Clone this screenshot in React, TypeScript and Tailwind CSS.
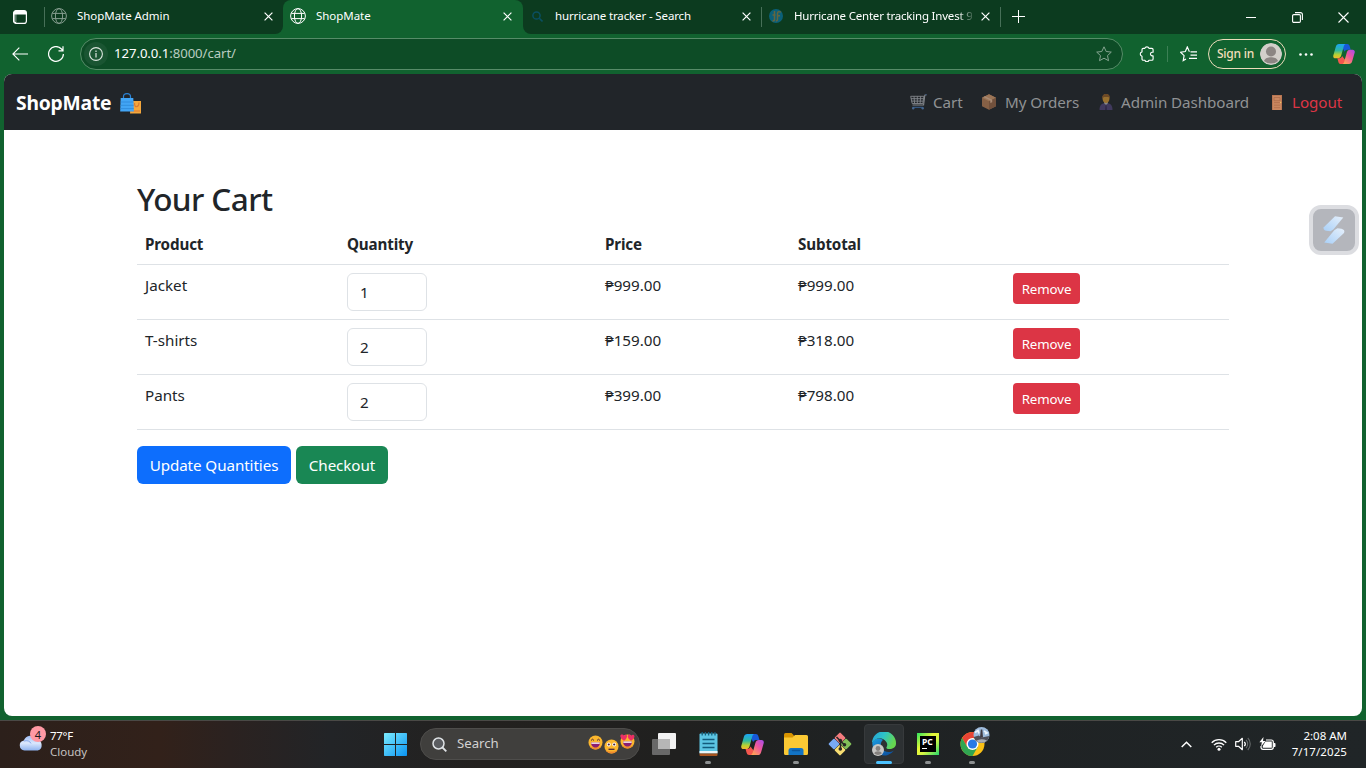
import React from "react";

type Box = { children: React.ReactNode; className?: string; vb?: string };

function Svg({ children, className = "", vb = "0 0 16 16" }: Box) {
  return (
    <svg viewBox={vb} className={`block shrink-0 ${className}`} fill="none">
      {children}
    </svg>
  );
}

/* ---------- browser chrome icons ---------- */

const Globe = ({ className = "" }) => (
  <Svg className={`h-4 w-4 ${className}`}>
    <g stroke="#fff" strokeWidth="1">
      <circle cx="8" cy="8" r="7.4" />
      <ellipse cx="8" cy="8" rx="3.6" ry="7.4" />
      <path d="M1.3 5.4h13.4M1.3 10.6h13.4" />
    </g>
  </Svg>
);

const Close = () => (
  <Svg className="h-[9px] w-[9px]" vb="0 0 9 9">
    <path d="M.6.6l7.8 7.8M8.4.6L.6 8.4" stroke="#fff" strokeWidth="1.2" />
  </Svg>
);

const Copilot = ({ className = "", id }: { className?: string; id: string }) => (
  <Svg className={className} vb="0 0 24 22">
    <defs>
      <linearGradient id={`${id}a`} x1="0" y1="0" x2="0" y2="1">
        <stop offset="0" stopColor="#1ba3f5" />
        <stop offset=".45" stopColor="#2fb9a0" />
        <stop offset=".75" stopColor="#b8d230" />
        <stop offset="1" stopColor="#f5b82e" />
      </linearGradient>
      <linearGradient id={`${id}b`} x1="1" y1="0" x2=".2" y2="1">
        <stop offset="0" stopColor="#a44cf0" />
        <stop offset=".5" stopColor="#f0569c" />
        <stop offset="1" stopColor="#ffa552" />
      </linearGradient>
    </defs>
    <path d="M11 0h4.600c1.300 0 2.100.8 2.500 2l1.300 4.200h-3.800c-1.600 0-2.400 1-2.800 2.400L9.500 3z" fill="#1758d8" />
    <path d="M6.500 0h7.200c-1.300.500-1.700 1.700-2.100 3.100L9 12.500c-.6 2.200-1.600 3.300-3.700 3.300H2.600C.6 15.800-.2 14.200.3 12.300L3 3C3.600 1 4.700 0 6.500 0z" fill={`url(#${id}a)`} />
    <path d="M13 22H8.400c-1.300 0-2.100-.8-2.500-2l-1.200-4.200h1.800c2 0 2.900-1.200 3.400-2.700L14.500 19z" fill="#f4574e" />
    <path d="M17.500 22h-7.200c1.300-.5 1.700-1.700 2.100-3.100L15 9.500c.6-2.200 1.600-3.300 3.700-3.300h2.700c2 0 2.800 1.600 2.300 3.500L21 19c-.6 2-1.700 3-3.500 3z" fill={`url(#${id}b)`} />
  </Svg>
);

function Tab({ title, icon, className = "", fade = false, track }: { title: string; icon: React.ReactNode; className?: string; fade?: boolean; track: string }) {
  return (
    <div className={`flex h-full shrink-0 items-center pb-0.5 ${className}`}>
      <span className="flex w-[18px] justify-center">{icon}</span>
      <span
        className={`ml-[9px] w-[178px] whitespace-nowrap text-[11.5px] text-white ${track} ${
          fade ? "[mask-image:linear-gradient(90deg,#000_164px,transparent_182px)]" : ""
        }`}
      >
        {title}
      </span>
      <span className="ml-[9px]">
        <Close />
      </span>
    </div>
  );
}

function TabStrip() {
  return (
    <div className="flex h-[34px] bg-[#11622f]">
      <div className="flex h-full w-[283px] items-center rounded-br-lg bg-[#0c3b1f]">
        <div className="flex w-11 justify-center pb-px pr-1">
          <Svg className="h-[14px] w-[14px]" vb="0 0 14 14">
            <rect x=".6" y=".6" width="12.800" height="12.800" rx="2.500" stroke="#fff" strokeWidth="1.200" />
            <path d="M.6 3.200C.6 1.500 1.500.6 3 .6h8c1.500 0 2.400 1 2.400 2.600v1.300H.6zM.6 4h2.600v9.400H3C1.500 13.400.6 12.500.6 11z" fill="#fff" />
            <path d="M1.500 4.500H3V12H2q-.5-.3-.5-1z" fill="#5d7e6a" />
          </Svg>
        </div>
        <div className="h-5 w-px bg-[#477058]" />
        <Tab title="ShopMate Admin" icon={<Globe className="opacity-50" />} className="pl-[5px]" track="tracking-[-0.05px]" />
      </div>
      <div className="w-[240px] bg-[linear-gradient(#0c3b1f_50%,#11622f_50%)]">
        <div className="h-full rounded-t-lg bg-[#11622f]">
          <Tab title="ShopMate" icon={<Globe />} className="pl-[6px]" track="tracking-[-0.05px]" />
        </div>
      </div>
      <div className="flex h-full flex-1 items-center rounded-bl-lg bg-[#0c3b1f]">
        <div className="w-[238px]">
          <Tab
            title="hurricane tracker - Search"
            className="pl-[5px]"
            track="tracking-[-0.13px]"
            icon={
              <Svg className="h-[11px] w-[11px]" vb="0 0 11 11">
                <circle cx="4.500" cy="4.500" r="3.600" stroke="#0a4f61" strokeWidth="1.500" />
                <path d="M7.300 7.300l3.200 3.200" stroke="#0a4f61" strokeWidth="1.600" />
              </Svg>
            }
          />
        </div>
        <div className="h-5 w-px bg-[#477058]" />
        <div className="w-[238px]">
          <Tab
            title="Hurricane Center tracking Invest 9"
            className="pl-[5px]"
            fade
            track="tracking-[-0.2px]"
            icon={
              <Svg className="h-[14px] w-[14px]" vb="0 0 14 14">
                <circle cx="7" cy="7" r="7" fill="#0b6079" />
                <path d="M5.500 2v8.500c0 1-1 1.500-2 1.500M3.500 6h3M12 3.200C10 2.200 8.500 2.500 8.500 4.500v5.800c0 1-.6 1.700-1.600 1.700M8 6.800h3" stroke="#64663f" strokeWidth="1.500" />
              </Svg>
            }
          />
        </div>
        <div className="h-5 w-px bg-[#477058]" />
        <div className="flex w-[35px] justify-center pb-0.5">
          <Svg className="h-[13px] w-[13px]" vb="0 0 13 13">
            <path d="M6.500 0v13M0 6.500h13" stroke="#fff" strokeWidth="1" />
          </Svg>
        </div>
        <div className="ml-auto flex">
          <span className="flex w-[46px] items-center justify-center">
            <span className="h-px w-2.5 bg-white" />
          </span>
          <span className="flex w-[46px] justify-center">
            <Svg className="h-[11px] w-[11px]" vb="0 0 11 11">
              <rect x=".6" y="2.600" width="7.800" height="7.800" rx="1.200" stroke="#fff" strokeWidth="1.100" />
              <path d="M3 .6h5.400c1.200 0 2 .8 2 2V8" stroke="#fff" strokeWidth="1.100" />
            </Svg>
          </span>
          <span className="flex w-[46px] justify-center">
            <Svg className="h-[11px] w-[11px]" vb="0 0 11 11">
              <path d="M.5.5l10 10M10.500.5l-10 10" stroke="#fff" strokeWidth="1.100" />
            </Svg>
          </span>
        </div>
      </div>
    </div>
  );
}

function Toolbar() {
  return (
    <div className="flex h-10 items-center bg-[#11622f]">
      <span className="flex w-10 justify-center">
        <Svg className="h-[14px] w-4" vb="0 0 16 14">
          <path d="M16 7H1M7.300.6L.9 7l6.400 6.400" stroke="#fff" strokeWidth="1.100" />
        </Svg>
      </span>
      <span className="flex w-8 justify-center">
        <Svg className="h-4 w-4">
          <path d="M15.400 8A7.400 7.400 0 1 1 13.200 2.700L15 4.500M15 .3v4.500h-4.500" stroke="#fff" strokeWidth="1.200" />
        </Svg>
      </span>
      <div className="ml-2 flex h-8 w-[1043px] items-center rounded-full border border-[#568c68] bg-[#0d4c26] pl-[3px] pr-[10px]">
        <span className="flex h-6 w-6 items-center justify-center rounded-full bg-[#1a5532]">
          <Svg className="h-[14px] w-[14px]" vb="0 0 14 14">
            <circle cx="7" cy="7" r="6.400" stroke="#dce7df" strokeWidth="1.100" />
            <path d="M7 6v4.500M7 3.500v1.400" stroke="#dce7df" strokeWidth="1.200" />
          </Svg>
        </span>
        <span className="ml-[6px] whitespace-nowrap text-[13.200px] tracking-[-0.07px] text-[#bacdc1]">
          <span className="text-white">127.0.0.1</span>:8000/cart/
        </span>
        <Svg className="ml-auto h-4 w-4">
          <path d="M8 .8l2.200 4.700 5.100.6-3.800 3.500 1 5.100L8 12.200l-4.500 2.500 1-5.100L.7 6.100l5.100-.6z" stroke="#86a591" strokeWidth="1" strokeLinejoin="round" />
        </Svg>
      </div>
      <span className="ml-4">
        <Svg className="h-4 w-4">
          <path d="M5.800 2.400a2.200 2.200 0 0 1 4.200 0h2.800c.8 0 1.300.5 1.300 1.300v2.500h-1.200a1.900 1.900 0 0 0 0 3.700h1.200v3c0 .8-.5 1.300-1.300 1.300H10a2.200 2.200 0 0 1-4.200 0H4.300c-.8 0-1.300-.5-1.300-1.300v-2.700a2.200 2.200 0 0 1 0-4.300V3.700c0-.8.500-1.300 1.300-1.300z" stroke="#fff" strokeWidth="1.150" strokeLinejoin="round" />
        </Svg>
      </span>
      <span className="ml-3 h-4 w-px bg-[#3c8055]" />
      <Svg className="ml-3 h-4 w-[17px]" vb="0 0 17 16">
        <path d="M9.500 5.500h-.2L7.300.9l-2 4.600-4.700.7 3.500 3.400-.9 5L6 13M10.500 5.900H17M10.500 9.100H17M9 12.300h8" stroke="#fff" strokeWidth="1.150" />
      </Svg>
      <div className="ml-[11px] flex h-[30px] w-[78px] items-center justify-between rounded-full border border-[#ecdcbb] pl-2 pr-[3px]">
        <span className="whitespace-nowrap text-[12px] font-medium tracking-[-0.25px] text-[#f2dfbb]">Sign in</span>
        <Svg className="h-[22px] w-[22px] rounded-full" vb="0 0 22 22">
          <circle cx="11" cy="11" r="11" fill="#d2cfca" />
          <circle cx="11" cy="8.500" r="5" fill="#8b8683" />
          <path d="M4 18c1-3 4-3.800 7-3.800s6 .8 7 3.800a11 11 0 0 1-14 0z" fill="#8b8683" />
        </Svg>
      </div>
      <Svg className="ml-[13px] h-[3px] w-[14px]" vb="0 0 14 3">
        <circle cx="1.500" cy="1.500" r="1.300" fill="#fff" />
        <circle cx="7" cy="1.500" r="1.300" fill="#fff" />
        <circle cx="12.500" cy="1.500" r="1.300" fill="#fff" />
      </Svg>
      <Copilot id="ct" className="ml-[20px] h-5 w-[22px]" />
    </div>
  );
}

/* ---------- shop page ---------- */

function NavItem({ icon, label, className = "" }: { icon: React.ReactNode; label: string; className?: string }) {
  return (
    <a className={`flex items-center whitespace-nowrap text-[15.200px] tracking-[-0.07px] text-[#909294] ${className}`}>
      {icon}
      <span className="leading-6">{label}</span>
    </a>
  );
}

function Navbar() {
  return (
    <nav className="flex h-14 items-center rounded-t-lg bg-[#212529] pl-3 pr-5">
      <span className="w-[104px] whitespace-nowrap pt-0.5 text-[19.300px] font-bold leading-7 tracking-[-0.2px] text-white">ShopMate</span>
      <Svg className="h-[21px] w-[22px] translate-y-px" vb="0 0 22 21">
        <path d="M3.500 6V3.500C3.500 1.500 5 .6 7 .6s3.500.9 3.500 2.900V6" stroke="#2a83d5" strokeWidth="1.200" />
        <path d="M11 8h10v12.500H10z" fill="#f4a73c" />
        <path d="M14.500 10c0 6 4.500 4 4.500-.500M11 18h9" stroke="#d97b34" strokeWidth="1.200" />
        <path d="M.7 5h12.600l.6 13.500H.2z" fill="#42a5f5" />
        <path d="M.6 9h12.900M.5 12.300h13.200M.3 15.600h13.500" stroke="#2f8bdb" strokeWidth=".9" />
      </Svg>
      <div className="ml-auto flex">
        <NavItem
          className="w-[71px]"
          label="Cart"
          icon={
            <Svg className="mr-[6px] h-4 w-[17px]" vb="0 0 17 16">
              <path d="M16.500.8L14.800 1.300 13.600 11H2.500" stroke="#83878c" strokeWidth="1.100" />
              <path d="M.7 2.300h13.200l-1 7.200H2.200zM.9 4.700h12.600M1.500 7.100h11.700M4 2.300l.6 7.200M7.300 2.300v7.200M10.700 2.300l-.6 7.200" stroke="#83878c" strokeWidth=".9" />
              <path d="M15.500.9l1-.5M2.500 13.300h10.700" stroke="#34557e" strokeWidth="1.300" />
              <circle cx="3.200" cy="14.300" r="1.200" fill="#43658e" />
              <circle cx="12.700" cy="14.300" r="1.200" fill="#43658e" />
            </Svg>
          }
        />
        <NavItem
          className="w-[118px]"
          label="My Orders"
          icon={
            <Svg className="mr-[8px] h-4 w-4">
              <path d="M8 .3L15 3.700v8.500l-7 3.500-7-3.500V3.700z" fill="#866045" />
              <path d="M8 .3L15 3.700 8 7.200 1 3.700z" fill="#9b7557" />
              <path d="M8 7.200l7-3.500v8.500l-7 3.500z" fill="#72513c" />
              <path d="M4 2.200l7.200 3.500v2.500l-1.900.8V6.600L2.300 3z" fill="#a98b74" />
            </Svg>
          }
        />
        <NavItem
          className="w-[171px]"
          label="Admin Dashboard"
          icon={
            <Svg className="mr-[8px] h-4 w-[14px]" vb="0 0 14 16">
              <path d="M.5 16c0-4 1.500-6.500 4.500-6.800h4c3 .3 4.500 2.800 4.500 6.800z" fill="#40395d" />
              <path d="M5 9l2 2.500L9 9l-.5-1.500h-3z" fill="#888" />
              <path d="M6.500 10.500h1l.6 5.500H6z" fill="#302a48" />
              <path d="M3.500 4.500C3.300 1.500 5 0 7 0s3.700 1.500 3.500 4.500C10.400 7 9 9 7 9S3.600 7 3.500 4.500z" fill="#98702e" />
              <path d="M3.300 4.500C2.800 1.200 4.700 0 7.200 0s4 1.200 3.500 4.500L9.500 3H5z" fill="#6d4a26" />
            </Svg>
          }
        />
        <NavItem
          className="w-[72px] pl-[2px] !text-[#dc3545]"
          label="Logout"
          icon={
            <Svg className="mr-[10px] h-[15px] w-[10px]" vb="0 0 10 15">
              <rect width="10" height="15" fill="#c98760" />
              <path d="M2 2.500h6v3.200H2zM2 7.600h6M2 10.200h6M2 12.700h6" stroke="#ad6d4b" strokeWidth=".8" />
              <path d="M.3 15V.3h9.400V15" stroke="#a96547" strokeWidth=".6" />
              <circle cx="8.600" cy="7.500" r=".7" fill="#f0c060" />
            </Svg>
          }
        />
      </div>
    </nav>
  );
}

const rows = [
  { name: "Jacket", qty: 1, price: "₱999.00", sub: "₱999.00" },
  { name: "T-shirts", qty: 2, price: "₱159.00", sub: "₱318.00" },
  { name: "Pants", qty: 2, price: "₱399.00", sub: "₱798.00" },
];

const grid = "grid grid-cols-[202px_258px_193px_215px_224px] border-b border-[#dee2e6]";

function Cart() {
  return (
    <main className="mx-auto w-[1092px] pt-12 text-[15.200px] leading-6 text-[#212529]">
      <h2 className="mb-2 h-[38px] whitespace-nowrap text-[31.500px] font-medium leading-[41px] tracking-[-0.6px]">Your Cart</h2>
      <div className={`${grid} h-[41px] font-bold tracking-[-0.15px]`}>
        {["Product", "Quantity", "Price", "Subtotal"].map((h) => (
          <div key={h} className="p-2">{h}</div>
        ))}
      </div>
      {rows.map((r) => (
        <div key={r.name} className={`${grid} h-[55px]`}>
          <div className="p-2">{r.name}</div>
          <div className="p-2">
            <div className="h-[38px] w-20 rounded-md border border-[#dee2e6] px-3 py-1.5">{r.qty}</div>
          </div>
          <div className="p-2">{r.price}</div>
          <div className="p-2">{r.sub}</div>
          <div className="p-2">
            <button className="flex h-[31px] w-[67px] items-center justify-center rounded bg-[#dc3545] text-[13.300px] tracking-[-0.1px] text-white">
              Remove
            </button>
          </div>
        </div>
      ))}
      <div className="mt-4 flex gap-[5px] text-[15.200px] tracking-[-0.08px] text-white">
        <button className="h-[38px] w-[154px] whitespace-nowrap rounded-md bg-[#0d6efd]">Update Quantities</button>
        <button className="h-[38px] w-[92px] whitespace-nowrap rounded-md bg-[#198754]">Checkout</button>
      </div>
    </main>
  );
}

function FloatingWidget() {
  return (
    <div className="absolute left-[1309px] top-[205px] flex h-[50px] w-[50px] items-center justify-center rounded-xl border-4 border-[#dcdde1] bg-[#b4b6bc]">
      <Svg className="h-7 w-[22px]" vb="0 0 22 28">
        <defs>
          <linearGradient id="fw" x1="0" y1="1" x2="1" y2="0">
            <stop offset="0" stopColor="#a9d0f8" />
            <stop offset="1" stopColor="#e6f0fb" />
          </linearGradient>
        </defs>
        <path d="M12 .3L20.300 1.500 10.500 13.200 7.600 15.300 3 14.800C1 14 0 12.700.8 11.200z" fill="url(#fw)" />
        <path d="M9.500 27.700L1.200 26.500 11.500 14 14.500 12.300 18.500 12.800C21 13.500 22 15 21 17z" fill="url(#fw)" />
      </Svg>
    </div>
  );
}

/* ---------- taskbar ---------- */

function Emoji({ kind, className = "" }: { kind: "grin" | "flat" | "love"; className?: string }) {
  return (
    <Svg className={`h-[15px] w-[15px] ${className}`} vb="0 0 15 15">
      <circle cx="7.500" cy="7.500" r="7" fill="#fbb62d" />
      <path d="M1.500 11a7 7 0 0 0 12 0c-3 2-9 2-12 0z" fill="#f28a2e" />
      {kind === "flat" ? (
        <>
          <circle cx="4.800" cy="5.500" r="1.900" fill="#fff" />
          <circle cx="10.200" cy="5.500" r="1.900" fill="#fff" />
          <circle cx="4.800" cy="5.500" r="1.100" fill="#49263d" />
          <circle cx="10.200" cy="5.500" r="1.100" fill="#49263d" />
          <path d="M4.500 10.300h6" stroke="#49263d" strokeWidth="1.300" />
        </>
      ) : (
        <>
          <path d="M3 7.500h9c0 3-2 5-4.500 5S3 10.500 3 7.500z" fill="#8b1d72" />
          <path d="M3.300 7.500h8.400v1.300H3.300z" fill="#fff" />
          {kind === "grin" ? (
            <path d="M3 5.500l1.500-1.300L6 5.500M9 5.500l1.500-1.300L12 5.500" stroke="#49263d" strokeWidth="1" />
          ) : (
            <path d="M4 6.800C-.5 4-.5.3 2 .5c1 0 1.700.7 2 1.300C4.500 1 5.500.2 6.600 1 8 2.500 6 5.500 4 6.800zM11 6.800C6.500 4 7.500.3 9.300.5c1 0 1.700.7 2 1.300.5-.8 1.700-1.400 2.700-.6C15.500 3 13 5.500 11 6.800z" fill="#ec2f64" />
          )}
        </>
      )}
    </Svg>
  );
}

function TaskItem({ children, running = false, active = false }: { children: React.ReactNode; running?: boolean; active?: boolean }) {
  return (
    <div className="flex h-full w-11 shrink-0 justify-center">
      <div className={`relative mt-[3px] flex h-10 w-10 items-center justify-center rounded ${active ? "border border-[#373a3c] bg-[#2d3133]" : ""}`}>
        {children}
        {running && <span className="absolute bottom-0 h-[3px] w-1.5 rounded-full bg-[#8d9091]" />}
        {active && <span className="absolute -bottom-px h-[3px] w-4 rounded-full bg-[#4cc2ff]" />}
      </div>
    </div>
  );
}

function Taskbar() {
  return (
    <div className="flex h-12 items-center border-t border-[#4a4946] bg-[linear-gradient(90deg,#2c201b_0,#32211a_160px,#2b2220_230px,#222427_330px,#23211f_480px,#20201f_680px,#1f2223_850px,#202527_1366px)] pb-px">
      <div className="relative h-full w-[384px] shrink-0">
        <div className="flex h-full items-center pl-[19px]">
          <Svg className="h-5 w-6 -translate-y-0.5" vb="0 0 24 20">
            <defs>
              <linearGradient id="cl" x1="0" y1="0" x2="0" y2="1">
                <stop offset="0" stopColor="#9dbcf4" />
                <stop offset=".5" stopColor="#dbe8fd" />
                <stop offset="1" stopColor="#8fb3ef" />
              </linearGradient>
            </defs>
            <path d="M5.500 18.500a5 5 0 0 1-.7-9.900A7.200 7.200 0 0 1 18 7.500a5.700 5.700 0 0 1 .8 11z" fill="url(#cl)" />
            <path d="M5 9c3-1 6 0 7 2.500" stroke="#8cacec" strokeWidth="1" />
          </Svg>
          <div className="ml-[7px] whitespace-nowrap text-[11.500px] leading-4">
            <div className="tracking-[-0.3px] text-white">77°F</div>
            <div className="text-[#c5c2c0]">Cloudy</div>
          </div>
        </div>
        <span className="absolute left-[30px] top-[5px] flex h-4 w-4 items-center justify-center rounded-full bg-[#ff99a4] text-[11px] leading-none text-[#211b1b]">4</span>
      </div>
      <Svg className="h-[23px] w-[23px]" vb="0 0 23 23">
        <defs>
          <linearGradient id="wn" gradientUnits="userSpaceOnUse" x1="0" y1="0" x2="23" y2="23">
            <stop offset="0" stopColor="#7bebfe" />
            <stop offset="1" stopColor="#0a94f3" />
          </linearGradient>
        </defs>
        <path d="M0 .7Q0 0 .7 0H11v11H0zM12 0h10.300q.7 0 .7.700V11H12zM0 12h11v11H.7Q0 23 0 22.300zM12 12h11v10.300q0 .7-.7.700H12z" fill="url(#wn)" />
      </Svg>
      <div className="ml-[13px] flex h-8 w-[220px] shrink-0 items-center rounded-full border border-[#4e4d4b] bg-[#403f3d] pl-[11px] pr-1">
        <Svg className="h-[15px] w-[15px]" vb="0 0 15 15">
          <circle cx="6.500" cy="6.500" r="5.500" fill="#5a5c60" stroke="#dfe3e6" strokeWidth="1.500" />
          <path d="M10.500 10.500l3.800 3.800" stroke="#dfe3e6" strokeWidth="1.800" />
        </Svg>
        <span className="ml-[10px] text-[13.200px] text-[#d3d2d1]">Search</span>
        <span className="ml-auto flex items-center gap-px">
          <Emoji kind="grin" className="mb-[3px]" />
          <Emoji kind="flat" className="mt-[5px]" />
          <Emoji kind="love" className="mb-[5px]" />
        </span>
      </div>
      <div className="ml-[2px] flex h-full">
        <TaskItem>
          <Svg className="h-6 w-6" vb="0 0 24 24">
            <rect x="6" y="1" width="18" height="16" rx="1" fill="#f2f2f2" />
            <rect x="0" y="7" width="18" height="16" rx="1" fill="#686868" />
            <path d="M6 7h12v10H6z" fill="#b6b6b6" />
          </Svg>
        </TaskItem>
        <TaskItem running>
          <Svg className="h-6 w-[19px]" vb="0 0 19 24">
            <rect x=".5" y="1.500" width="18" height="20" rx="1" fill="#5cc5e3" />
            <path d="M.5 19h18v2.500H.5z" fill="#e9f5f8" />
            <path d="M.5 21.500h18V23q0 1-1 1h-16q-1 0-1-1z" fill="#a6541f" />
            <path d="M3.200 0v3.500M6.400 0v3.500M9.600 0v3.500M12.800 0v3.500M16 0v3.500" stroke="#12607e" strokeWidth="1.300" />
            <path d="M3.500 7.500h12M3.500 11.500h12M3.500 15.500h12" stroke="#125b7c" strokeWidth="1.500" />
          </Svg>
        </TaskItem>
        <TaskItem>
          <Copilot id="cb" className="h-[21px] w-[23px]" />
        </TaskItem>
        <TaskItem running>
          <Svg className="h-[22px] w-6" vb="0 0 24 22">
            <path d="M0 1.500Q0 0 1.500 0h6L10 2.500V7H0z" fill="#d99400" />
            <path d="M0 4.500h8.500L11 2h11.500Q24 2 24 3.500v17q0 1.500-1.500 1.500h-21Q0 22 0 20.500z" fill="#fbc934" />
            <path d="M4.500 22v-4.500q0-2.500 2.500-2.500h10q2.500 0 2.500 2.500V22z" fill="#1273c5" />
            <path d="M8.500 17.500h7" stroke="#0d569b" strokeWidth="1.500" strokeLinecap="round" />
          </Svg>
        </TaskItem>
        <TaskItem>
          <Svg className="h-6 w-6" vb="0 0 24 24">
            <g transform="rotate(45 12 12)">
              <rect x="3.700" y="3.700" width="8.100" height="8.100" rx="1" fill="#f37c7e" />
              <rect x="12.200" y="3.700" width="8.100" height="8.100" rx="1" fill="#82bf59" />
              <rect x="3.700" y="12.200" width="8.100" height="8.100" rx="1" fill="#78a9f4" />
              <rect x="12.200" y="12.200" width="8.100" height="8.100" rx="1" fill="#f7dd72" />
            </g>
            <path d="M8.500 5l4 4v8M12.500 9l4 4" stroke="#272625" strokeWidth="1.500" />
            <circle cx="12.300" cy="8.500" r="1.800" fill="#272625" />
            <circle cx="12.300" cy="17" r="1.800" fill="#272625" />
            <circle cx="16.500" cy="12.800" r="1.800" fill="#272625" />
          </Svg>
        </TaskItem>
        <TaskItem active>
          <Svg className="h-6 w-6" vb="0 0 24 24">
            <defs>
              <linearGradient id="e1" x1="0" y1="0" x2="1" y2=".4">
                <stop offset="0" stopColor="#249ed9" />
                <stop offset=".5" stopColor="#2dc3c8" />
                <stop offset="1" stopColor="#66d74f" />
              </linearGradient>
              <linearGradient id="e2" x1="0" y1="0" x2=".8" y2="1">
                <stop offset="0" stopColor="#1b9de2" />
                <stop offset="1" stopColor="#0c4f9d" />
              </linearGradient>
            </defs>
            <path d="M.3 11C2 6 8 5.500 11 8c-2 1.500-3 4.500-1.500 8 2 4 7.500 5.500 12.500 2.500A12 12 0 0 1 .3 11z" fill="url(#e2)" />
            <path d="M0 11A12 12 0 0 1 24 11.500c0 4-3.500 5.500-6.500 5.500-2.500 0-3.500-.8-3-1.700 1-1.500 1-3.500 0-5C11 4.500 3.500 5 0 11z" fill="url(#e1)" />
            <circle cx="6" cy="18" r="6" fill="#c8c7c5" />
            <circle cx="6" cy="16.500" r="2.400" fill="#85817e" />
            <path d="M2.300 21.500c0-3 7.400-3 7.400 0A5.500 5.500 0 0 1 2.300 21.500z" fill="#85817e" />
          </Svg>
        </TaskItem>
        <TaskItem running>
          <div className="flex h-[22px] w-[22px] items-center justify-center bg-[linear-gradient(135deg,#2ce55f,#eaf736_40%,#d5f545_60%,#24d66c)]">
            <div className="h-4 w-4 bg-black pl-[2px] pt-[2px] text-[8.500px] font-bold leading-[8px] text-white">
              PC
              <div className="mt-[2px] h-px w-[5px] bg-white" />
            </div>
          </div>
        </TaskItem>
        <TaskItem running>
          <Svg className="-mt-[5px] h-[29px] w-[30px] translate-x-[3px]" vb="0 0 30 29">
            <circle cx="12.500" cy="17" r="12" fill="#fbc116" />
            <path d="M2.100 11A12 12 0 0 1 22.900 11H12.500L7.300 20z" fill="#e94435" />
            <path d="M2.100 11A12 12 0 0 0 12.500 29l5.200-9H7.300z" fill="#30a652" />
            <circle cx="12.500" cy="17" r="6" fill="#fff" />
            <circle cx="12.500" cy="17" r="4.600" fill="#287ae6" />
            <circle cx="21.500" cy="8" r="8" fill="#9ebbdc" />
            <path d="M13.700 10l5-1.500 3 2 7.500-1.500A8 8 0 0 1 15 13z" fill="#4f4e56" />
            <path d="M16 13.800q5-3 11-.4a8 8 0 0 1-11 .4z" fill="#a9adb4" />
            <path d="M20.800 2.500h1.500l.7 8h-3z" fill="#403940" />
            <path d="M15 5.500l3-2 1 3M24 4l3 2-2 1" stroke="#edf4fc" strokeWidth="1.700" />
          </Svg>
        </TaskItem>
      </div>
      <div className="ml-auto flex items-center">
        <Svg className="h-[7px] w-[11px]" vb="0 0 11 7">
          <path d="M.7 6l4.800-4.800L10.300 6" stroke="#fff" strokeWidth="1.500" />
        </Svg>
        <Svg className="ml-[19px] h-[13px] w-4" vb="0 0 16 13">
          <g stroke="#fff" strokeWidth="1.300">
            <path d="M.7 4.700a10.300 10.300 0 0 1 14.600 0M2.900 7.100a7.200 7.200 0 0 1 10.200 0M5.200 9.300a4 4 0 0 1 5.600 0" />
          </g>
          <circle cx="8" cy="11.300" r="1.500" fill="#fff" />
        </Svg>
        <Svg className="ml-2 h-[14px] w-4" vb="0 0 16 14">
          <path d="M.7 4.700h2.800L7.300 1.300v11.400L3.500 9.300H.7zM9.300 4.800a3.200 3.200 0 0 1 0 4.400" stroke="#fff" strokeWidth="1.200" strokeLinejoin="round" />
          <path d="M11 2.800a6 6 0 0 1 0 8.400M12.800 1a8.500 8.500 0 0 1 0 12" stroke="#65696a" strokeWidth="1.100" />
        </Svg>
        <Svg className="ml-2 h-[14px] w-[17px]" vb="0 0 17 14">
          <path d="M7 3h5.300q2 0 2 2v5.300q0 2-2 2H4q-2 0-2-2V9" stroke="#fff" strokeWidth="1.200" />
          <path d="M6.500 4.500h6.300v6.300H3.800V9zM14.500 6h1.200q.8 0 .8.800v2.400q0 .8-.8.800h-1.200z" fill="#fff" />
          <path d="M4.500 0L.4 5.200h2.500L2 9.500 6.500 4H4z" fill="#fff" />
        </Svg>
        <div className="ml-[14px] mr-[19px] w-[57px] whitespace-nowrap text-right text-[11.500px] leading-4 text-white">
          <div>2:08 AM</div>
          <div className="tracking-[0.080px]">7/17/2025</div>
        </div>
      </div>
    </div>
  );
}

export default function App() {
  return (
    <div className="relative flex h-[768px] w-[1366px] flex-col overflow-hidden bg-[#11622f] font-['Noto_Sans',sans-serif]">
      <TabStrip />
      <Toolbar />
      <div className="mx-1 mb-1 flex-1 rounded-lg bg-white">
        <Navbar />
        <Cart />
      </div>
      <Taskbar />
      <FloatingWidget />
    </div>
  );
}
